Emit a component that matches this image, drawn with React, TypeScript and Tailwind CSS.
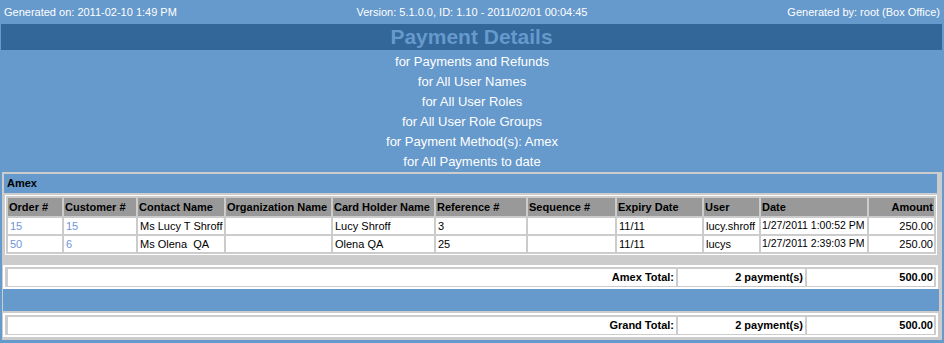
import React from "react";

const cols = "grid grid-cols-[54px_72px_86px_105px_101px_90px_87px_85px_55px_106px_65px] gap-[2px]";

const headers = [
  "Order #",
  "Customer #",
  "Contact Name",
  "Organization Name",
  "Card Holder Name",
  "Reference #",
  "Sequence #",
  "Expiry Date",
  "User",
  "Date",
  "Amount",
];

const rows = [
  ["15", "15", "Ms Lucy T Shroff", "", "Lucy Shroff", "3", "", "11/11", "lucy.shroff", "1/27/2011 1:00:52 PM", "250.00"],
  ["50", "6", "Ms Olena  QA", "", "Olena QA", "25", "", "11/11", "lucys", "1/27/2011 2:39:03 PM", "250.00"],
];

function TotalBox({ label }: { label: string }) {
  return (
    <div className="ml-[1px] w-[935px] border-2 border-white bg-[#cccccc] pl-[3px] pr-[2px] py-[2px]">
      <div className="grid grid-cols-[668px_127px_127px] gap-[2px] h-[16px] text-[11px] font-bold text-black">
        <div className="bg-white flex items-center justify-end pr-[2px]">{label}</div>
        <div className="bg-white flex items-center justify-end pr-[2px]">2 payment(s)</div>
        <div className="bg-white flex items-center justify-end pr-[1px]">500.00</div>
      </div>
    </div>
  );
}

export default function App() {
  return (
    <div
      className="w-[944px] h-[343px] bg-[#6699cc] overflow-hidden"
      style={{ fontFamily: '"Liberation Sans", Arial, sans-serif' }}
    >
      <div className="h-[24px] flex items-center justify-between px-[4px] text-[11px] text-white relative">
        <span>Generated on: 2011-02-10 1:49 PM</span>
        <span className="absolute left-0 right-0 text-center pointer-events-none">
          Version: 5.1.0.0, ID: 1.10 - 2011/02/01 00:04:45
        </span>
        <span>Generated by: root (Box Office)</span>
      </div>
      <div className="ml-[1px] w-[941px] h-[26px] bg-[#336699] flex items-center justify-center text-[21px] font-bold text-[#6699cc]">
        Payment Details
      </div>
      <div className="pt-[2px] h-[122px] flex flex-col items-center text-[13px] text-white leading-[20px]">
        <div>for Payments and Refunds</div>
        <div>for All User Names</div>
        <div>for All User Roles</div>
        <div>for All User Role Groups</div>
        <div>for Payment Method(s): Amex</div>
        <div>for All Payments to date</div>
      </div>
      <div className="ml-[2px] w-[940px] bg-[#cccccc] pt-[2px] pb-[3px]">
        <div className="ml-[2px] w-[933px] h-[19px] bg-[#6699cc] flex items-center pl-[3px] text-[11px] font-bold text-black">
          Amex
        </div>
        <div className="mt-[2px] ml-[3px] w-[932px] border border-white p-[2px]">
          <div className={`${cols} text-[11px]`}>
            {headers.map((h, i) => (
              <div
                key={h}
                className={`h-[18px] bg-[#999999] font-bold text-black flex items-center ${
                  i === 10 ? "justify-end pr-[1px]" : "pl-[1px]"
                }`}
              >
                {h}
              </div>
            ))}
            {rows.map((r, ri) =>
              r.map((c, ci) => (
                <div
                  key={`${ri}-${ci}`}
                  className={`h-[16px] bg-white flex items-center whitespace-pre ${
                    ci === 10 ? "justify-end pr-[1px]" : ci === 9 ? "pl-[1px] text-[10.5px]" : "pl-[2px]"
                  } ${ci < 2 ? "text-[#6f94d8]" : "text-black"}`}
                >
                  {c}
                </div>
              ))
            )}
          </div>
        </div>
        <div className="mt-[10px]">
          <TotalBox label="Amex Total:" />
        </div>
        <div className="ml-[1px] w-[936px] h-[22px] bg-[#6699cc]" />
        <div className="mt-[2px]">
          <TotalBox label="Grand Total:" />
        </div>
      </div>
    </div>
  );
}
